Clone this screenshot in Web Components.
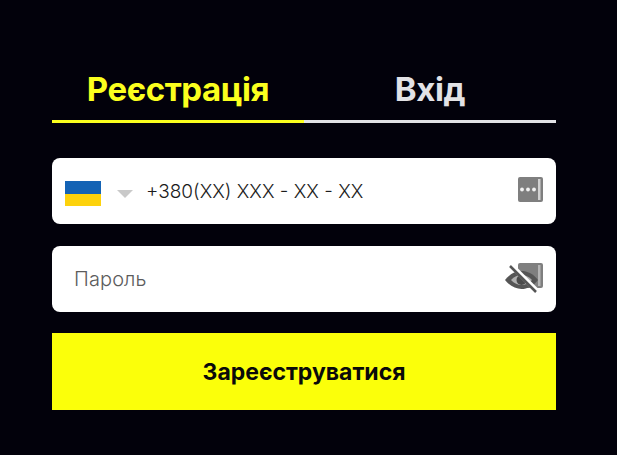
<!DOCTYPE html>
<html lang="uk">
<head>
<meta charset="utf-8">
<title>Реєстрація</title>
<style>
  html, body { margin: 0; padding: 0; background: #02010b; }
  body { font-family: "Inter", "Noto Sans", sans-serif; }
</style>
</head>
<body>
<auth-form>
  <auth-tabs slot="tabs"></auth-tabs>
  <phone-field slot="fields"></phone-field>
  <password-field slot="fields"></password-field>
  <submit-button slot="submit">Зареєструватися</submit-button>
</auth-form>

<script>
class AuthForm extends HTMLElement {
  constructor() {
    super()
    this.attachShadow({ mode: "open" })
    this.shadowRoot.innerHTML = `
      <style>
        :host {
          display: block;
          box-sizing: border-box;
          width: 617px;
          height: 455px;
          padding: 66px 61px 0 52px;
          overflow: hidden;
        }
        .fields {
          display: flex;
          flex-direction: column;
          gap: 22px;
          margin: 35px 0 21px;
        }
      </style>
      <slot name="tabs"></slot>
      <div class="fields"><slot name="fields"></slot></div>
      <slot name="submit"></slot>
    `
  }
}
customElements.define("auth-form", AuthForm)

class AuthTabs extends HTMLElement {
  constructor() {
    super()
    this.attachShadow({ mode: "open" })
    this.shadowRoot.innerHTML = `
      <style>
        :host {
          display: grid;
          grid-template-columns: 252px 252px;
        }
        div {
          box-sizing: border-box;
          height: 57px;
          padding-top: 2px;
          text-align: center;
          font-size: 33px;
          line-height: 42px;
          font-weight: 700;
          letter-spacing: -0.4px;
          border-bottom: 3px solid #e2e2e6;
          color: #e2e2e6;
        }
        .active {
          color: #fbff1e;
          border-bottom-color: #fbff1e;
        }
      </style>
      <div class="active">Реєстрація</div>
      <div>Вхід</div>
    `
  }
}
customElements.define("auth-tabs", AuthTabs)

class PhoneField extends HTMLElement {
  constructor() {
    super()
    this.attachShadow({ mode: "open" })
    this.shadowRoot.innerHTML = `
      <style>
        :host {
          display: flex;
          align-items: center;
          box-sizing: border-box;
          height: 66px;
          padding: 0 13px 0 13px;
          background: #fff;
          border-radius: 8px;
          color: #1c1c1c;
          font-size: 19px;
          font-weight: 300;
        }
        .flag { width: 36px; height: 25px; flex: none; display: block; margin-top: 5px; }
        .arrow {
          width: 0; height: 0; flex: none;
          margin: 5px 13px 0 16px;
          border-left: 8px solid transparent;
          border-right: 8px solid transparent;
          border-top: 8px solid #c9c9c9;
        }
        .value { flex: 1; white-space: nowrap; }
        svg.key { width: 25px; height: 25px; flex: none; display: block; margin-top: -4px; }
      </style>
      <svg class="flag" viewBox="0 0 36 25">
        <rect width="36" height="13" fill="#1463b5"/>
        <rect y="13" width="36" height="12" fill="#fdd20c"/>
      </svg>
      <span class="arrow"></span>
      <span class="value">+380(XX) XXX - XX - XX</span>
      <svg class="key" viewBox="0 0 25 25">
        <rect width="25" height="25" rx="2" fill="#7f7f7f"/>
        <rect x="20" y="2" width="2.5" height="21" fill="#d2d2d2"/>
        <circle cx="4" cy="12.5" r="1.9" fill="#f2f2f2"/>
        <circle cx="10" cy="12.5" r="1.9" fill="#f2f2f2"/>
        <circle cx="16" cy="12.5" r="1.9" fill="#f2f2f2"/>
      </svg>
    `
  }
}
customElements.define("phone-field", PhoneField)

class PasswordField extends HTMLElement {
  constructor() {
    super()
    this.attachShadow({ mode: "open" })
    this.shadowRoot.innerHTML = `
      <style>
        :host {
          display: flex;
          align-items: center;
          box-sizing: border-box;
          height: 66px;
          padding: 0 13px 0 22px;
          background: #fff;
          border-radius: 8px;
          color: #5c5c5c;
          font-size: 20px;
          font-weight: 300;
        }
        .label { flex: 1; letter-spacing: 0.1px; }
        svg { width: 38px; height: 32px; flex: none; display: block; }
      </style>
      <span class="label">Пароль</span>
      <svg viewBox="0 0 38 32">
        <rect x="13" y="0" width="25" height="25" rx="2" fill="#7f7f7f"/>
        <rect x="33" y="2" width="2.500" height="21" fill="#b5b5b5"/>
        <path d="M0 17C5 10.500 11 8 16.500 8S28 10.500 33 17C28 23.500 22 26 16.500 26S5 23.500 0 17z" fill="#555"/>
        <path d="M6 17C9 13.500 13 12 16.500 12s7.500 1.500 10.500 5C24 20.500 20 22 16.500 22S9 20.500 6 17z" fill="#b0b0b0"/>
        <circle cx="16.500" cy="17" r="5" fill="#4a4a4a"/>
        <path d="M6 2L32 28" stroke="#fff" stroke-width="5"/>
        <path d="M5 3L31 29" stroke="#555" stroke-width="2.500"/>
      </svg>
    `
  }
}
customElements.define("password-field", PasswordField)

class SubmitButton extends HTMLElement {
  constructor() {
    super()
    this.attachShadow({ mode: "open" })
    this.shadowRoot.innerHTML = `
      <style>
        :host {
          display: flex;
          align-items: center;
          justify-content: center;
          height: 77px;
          background: #fbff0a;
          color: #0a0a0a;
          font-size: 23px;
          font-weight: 700;
          cursor: pointer;
        }
      </style>
      <slot></slot>
    `
  }
}
customElements.define("submit-button", SubmitButton)
</script>
</body>
</html>
